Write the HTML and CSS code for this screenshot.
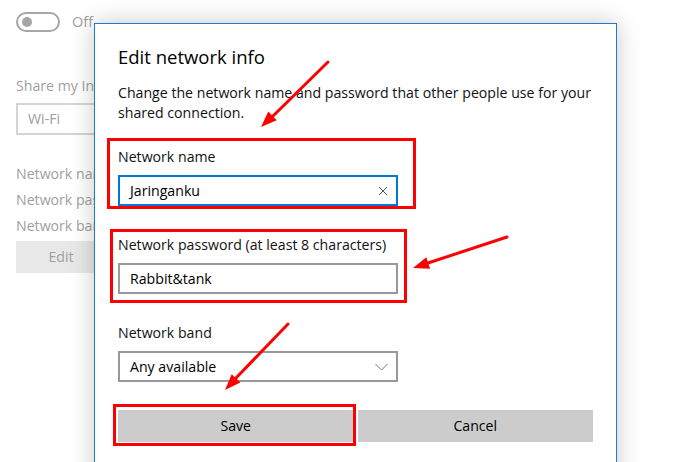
FILE: index.html
```html
<!DOCTYPE html>
<html>
<head>
<meta charset="utf-8">
<link rel="stylesheet" href="styles.css">
</head>
<body>
<div class="page">
  <div class="settings">
    <div class="toggle-row">
      <span class="toggle"><span class="knob"></span></span>
      <span class="toggle-text">Off</span>
    </div>
    <div class="share-label">Share my Internet connection from</div>
    <div class="combo">Wi-Fi</div>
    <div class="info-rows">
      <div class="info">Network name:</div>
      <div class="info">Network password:</div>
      <div class="info">Network band:</div>
    </div>
    <div class="edit-btn">Edit</div>
  </div>

  <div class="dialog">
    <h1 class="title">Edit network info</h1>
    <p class="desc">Change the network name and password that other people use for your shared connection.</p>
    <div class="field first">
      <div class="label">Network name</div>
      <div class="input focused">
        <span>Jaringanku</span>
        <svg class="clear" width="10" height="10" viewBox="0 0 10 10"><path d="M1 1L9 9M9 1L1 9" stroke="#555" stroke-width="1" fill="none"/></svg>
      </div>
    </div>
    <div class="field">
      <div class="label">Network password (at least 8 characters)</div>
      <div class="input"><span>Rabbit&amp;tank</span></div>
    </div>
    <div class="field">
      <div class="label">Network band</div>
      <div class="input">
        <span>Any available</span>
        <svg class="chev" width="13" height="8" viewBox="0 0 13 8"><path d="M0.5 1L6.5 7L12.5 1" stroke="#777" stroke-width="1" fill="none"/></svg>
      </div>
    </div>
    <div class="buttons">
      <div class="btn">Save</div>
      <div class="btn">Cancel</div>
    </div>
  </div>

  <div class="mark mark-name"></div>
  <div class="mark mark-pass"></div>
  <div class="mark mark-save"></div>

  <svg class="arrows" width="673" height="462" viewBox="0 0 673 462">
    <g stroke="#f00" stroke-width="3" fill="none" stroke-linecap="round">
      <line x1="328" y1="62" x2="273" y2="116"/>
      <line x1="507" y1="237" x2="428" y2="263"/>
      <line x1="288" y1="324" x2="236" y2="378"/>
    </g>
    <g fill="#f00">
      <polygon points="261,127 276.7,120.2 268.3,111.5"/>
      <polygon points="413,268 430.1,268.7 426.3,257.3"/>
      <polygon points="225,390 240.4,382.6 231.7,374.3"/>
    </g>
  </svg>
</div>
</body>
</html>
```

FILE: styles.css
```css
html, body {
  margin: 0;
  padding: 0;
  background: #fff;
}

body {
  font-family: "Open Sans", "Noto Sans", sans-serif;
  font-size: 14.15px;
  color: #000;
}

.page {
  position: relative;
  width: 673px;
  height: 462px;
  overflow: hidden;
}

/* background settings page */
.settings {
  padding: 0 16px;
  color: #a0a0a0;
}

.toggle-row {
  display: flex;
  align-items: center;
  gap: 12px;
  margin-top: 12px;
  height: 20px;
}

.toggle {
  box-sizing: border-box;
  width: 44px;
  height: 20px;
  border: 2px solid #a6a6a6;
  border-radius: 10px;
  display: flex;
  align-items: center;
  padding-left: 4px;
}

.knob {
  width: 10px;
  height: 10px;
  border-radius: 50%;
  background: #a6a6a6;
}

.toggle-text {
  font-size: 14.5px;
  line-height: 20px;
}

.share-label {
  margin-top: 44px;
  line-height: 20px;
}

.combo {
  box-sizing: border-box;
  margin-top: 7px;
  width: 200px;
  height: 32px;
  border: 2px solid #d4d4d4;
  padding-left: 10px;
  line-height: 28px;
}

.info-rows {
  margin-top: 26px;
}

.info {
  line-height: 26px;
  white-space: nowrap;
}

.edit-btn {
  margin-top: 2px;
  width: 90px;
  height: 32px;
  background: #e8e8e8;
  text-align: center;
  line-height: 32px;
}

/* dialog window */
.dialog {
  position: absolute;
  left: 94px;
  top: 23px;
  width: 475px;
  height: 460px;
  padding: 19px 23px 0;
  background: #fff;
  border: 1px solid #1d7bcf;
  box-shadow: 0 0 22px rgba(0, 0, 0, 0.22);
}

.title {
  margin: 0;
  font-size: 18.5px;
  font-weight: normal;
  line-height: 28px;
  color: #000;
}

.desc {
  margin: 12px 0 0;
  line-height: 20px;
  color: #111;
}

.field {
  margin-top: 29px;
}

.field.first {
  margin-top: 24px;
}

.label {
  line-height: 20px;
  margin-bottom: 8px;
  color: #111;
}

.input {
  box-sizing: border-box;
  width: 280px;
  height: 31px;
  border: 2px solid #999;
  padding: 0 8px 0 10px;
  display: flex;
  align-items: center;
  justify-content: space-between;
  color: #000;
}

.input.focused {
  border-color: #0078d7;
}

.buttons {
  display: flex;
  gap: 4px;
  margin-top: 28px;
}

.btn {
  flex: 1;
  height: 32px;
  background: #cccccc;
  text-align: center;
  line-height: 32px;
  color: #000;
}

/* red annotations */
.mark {
  position: absolute;
  box-sizing: border-box;
  border: 3px solid #f00;
}

.mark-name {
  left: 107px;
  top: 138px;
  width: 309px;
  height: 71px;
}

.mark-pass {
  left: 110px;
  top: 229px;
  width: 297px;
  height: 74px;
}

.mark-save {
  left: 113px;
  top: 404px;
  width: 243px;
  height: 42px;
}

.arrows {
  position: absolute;
  left: 0;
  top: 0;
  pointer-events: none;
}
```
